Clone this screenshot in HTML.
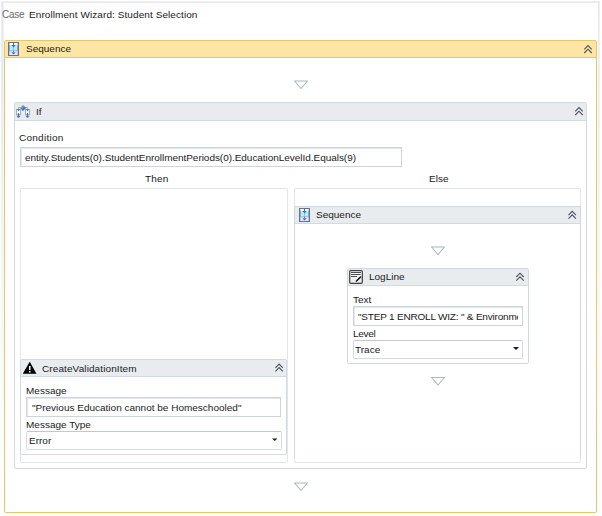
<!DOCTYPE html>
<html><head><meta charset="utf-8">
<style>
html,body{margin:0;padding:0;background:#fff;width:602px;height:516px;overflow:hidden;position:relative}
*{box-sizing:border-box}
.a{position:absolute}
.t{position:absolute;font-family:"Liberation Sans",sans-serif;font-size:10px;line-height:12px;color:#1a1a1a;white-space:pre;transform:scaleY(0.88);transform-origin:0 9.5px}
.box{position:absolute;border:1px solid #d3d9e3;border-radius:2px;background:#fff}
.hdr{position:absolute;background:#e9ecef;border-bottom:1px solid #d3d9e3}
.panel{position:absolute;border:1px solid #e1e6ed;border-radius:2px}
.tb{position:absolute;border:1px solid #cdd4df;background:#fff;box-shadow:inset 1px 1px 0 #e3e7ee}
.dd{position:absolute;border:1px solid #d6d9de;border-top-color:#c4c7cd;border-radius:2px;background:#fff}
</style></head><body>
<!-- outer faint frame -->
<div class="a" style="left:1px;top:1px;width:599px;height:2px;background:linear-gradient(#eef0f3,#e6e9ee)"></div>
<div class="a" style="left:1px;top:3px;width:3px;height:500px;background:linear-gradient(rgba(255,255,255,0),rgba(255,255,255,1)),linear-gradient(90deg,#eef1f4,#e2e6ec 50%,#f5f7fb)"></div>
<div class="a" style="left:598px;top:3px;width:2px;height:500px;background:linear-gradient(rgba(255,255,255,0),rgba(255,255,255,1)),linear-gradient(90deg,#e3e7ed,#f1f3f6)"></div>
<div class="t" style="left:2px;top:9px;color:#6a6a6a;transform:none;letter-spacing:-0.3px">Case</div>
<div class="t" style="left:29px;top:9px;letter-spacing:0.08px">Enrollment Wizard: Student Selection</div>

<!-- outer sequence -->
<div class="a" style="left:4px;top:40px;width:593px;height:473px;border:1px solid #e6c56d;border-radius:2px;background:#fff"></div>
<div class="a" style="left:5px;top:41px;width:591px;height:17px;background:#fde6a3;border-bottom:1px solid #e6c56d"></div>
<div class="t" style="left:26px;top:43px">Sequence</div>



<!-- If -->
<div class="box" style="left:14px;top:102px;width:573px;height:367px"></div>
<div class="hdr" style="left:15px;top:103px;width:571px;height:18px"></div>
<div class="t" style="left:36px;top:106px">If</div>
<div class="t" style="left:19px;top:132px;letter-spacing:0.25px">Condition</div>
<div class="tb" style="left:20px;top:147px;width:382px;height:20px"></div>
<div class="t" style="left:25px;top:152px;letter-spacing:-0.04px">entity.Students(0).StudentEnrollmentPeriods(0).EducationLevelId.Equals(9)</div>
<div class="t" style="left:145px;top:173px;letter-spacing:0.2px">Then</div>
<div class="t" style="left:429px;top:173px">Else</div>

<div class="panel" style="left:20px;top:188px;width:268px;height:275px"></div>
<div class="panel" style="left:294px;top:188px;width:287px;height:275px"></div>

<!-- inner sequence -->
<div class="a" style="left:294px;top:206px;width:287px;height:252px;border-left:1px solid #d3d9e3;border-right:1px solid #d3d9e3;border-top:1px solid #d3d9e3"></div>
<div class="hdr" style="left:295px;top:207px;width:285px;height:17px"></div>
<div class="t" style="left:316px;top:209px">Sequence</div>

<!-- LogLine -->
<div class="box" style="left:347px;top:268px;width:182px;height:96px"></div>
<div class="hdr" style="left:348px;top:269px;width:180px;height:17px"></div>
<div class="t" style="left:369px;top:271px">LogLine</div>
<div class="t" style="left:353px;top:294px">Text</div>
<div class="tb" style="left:353px;top:306px;width:170px;height:20px"></div>
<div class="a" style="left:354px;top:308px;width:164px;height:16px;overflow:hidden"><div class="t" style="left:4px;top:3px;letter-spacing:-0.2px">"STEP 1 ENROLL WIZ: " &amp; Environment</div></div>
<div class="t" style="left:353px;top:328px;letter-spacing:-0.3px">Level</div>
<div class="dd" style="left:353px;top:340px;width:170px;height:19px"></div>
<div class="t" style="left:355px;top:344px">Trace</div>

<!-- CVI -->
<div class="box" style="left:20px;top:359px;width:267px;height:96px"></div>
<div class="hdr" style="left:21px;top:360px;width:265px;height:17px"></div>
<div class="t" style="left:42px;top:363px;letter-spacing:0.1px">CreateValidationItem</div>
<div class="t" style="left:26px;top:385px">Message</div>
<div class="tb" style="left:26px;top:397px;width:255px;height:20px"></div>
<div class="t" style="left:32px;top:402px">"Previous Education cannot be Homeschooled"</div>
<div class="t" style="left:26px;top:419px">Message Type</div>
<div class="dd" style="left:26px;top:431px;width:256px;height:19px"></div>
<div class="t" style="left:29px;top:435px">Error</div>

<!-- icons & chevrons -->
<svg class="a" style="left:0;top:0" width="602" height="516">
<g fill="none" stroke="#4a525e" stroke-width="1.1">
<path d="M584.3 49.4 L588.0 45.6 L591.7 49.4 M584.3 53.0 L588.0 49.2 L591.7 53.0"/>
<path d="M575.3 111.4 L579.0 107.6 L582.7 111.4 M575.3 115.0 L579.0 111.2 L582.7 115.0"/>
<path d="M568.5 215.1 L572.2 211.3 L575.9 215.1 M568.5 218.7 L572.2 214.9 L575.9 218.7"/>
<path d="M516.3 277.0 L520.0 273.2 L523.7 277.0 M516.3 280.6 L520.0 276.8 L523.7 280.6"/>
<path d="M275.4 367.8 L279.1 364.0 L282.8 367.8 M275.4 371.4 L279.1 367.6 L282.8 371.4"/>
</g>
<g fill="#1a1a2a">
<path d="M272 438.5 L277.5 438.5 L274.75 441 Z"/>
<path d="M513 347 L519 347 L516 350 Z"/>
</g>
<!-- warning -->
<path d="M29.7 361.8 L36.5 373.8 L22.8 373.8 Z" fill="#000"/>
<rect x="29" y="366" width="1.5" height="4" fill="#fff"/>
<rect x="29" y="371" width="1.5" height="1.5" fill="#fff"/>
</svg>

<!-- Sequence icons -->
<svg class="a" style="left:8px;top:42px" width="11" height="14" viewBox="0 0 11 14">
<defs><linearGradient id="sg" x1="0" x2="1"><stop offset="0" stop-color="#8593b3"/><stop offset="0.5" stop-color="#dfe6f7"/><stop offset="1" stop-color="#8593b3"/></linearGradient></defs>
<rect x="0.5" y="0.5" width="10" height="13" fill="url(#sg)" stroke="#66728e"/>
<rect x="1.5" y="1" width="8" height="2" fill="#fdfdff"/>
<rect x="2" y="3" width="7" height="5.5" fill="#b0f0f3"/>
<rect x="1" y="8.5" width="9" height="0.8" fill="#a4afc6"/>
<rect x="1.5" y="9.3" width="8" height="3.7" fill="#e3e9fb"/>
<rect x="5" y="1" width="1" height="2" fill="#3f6dd0"/>
<rect x="5" y="5" width="1" height="3.5" fill="#8fc4ea"/>
<rect x="5" y="8.5" width="1" height="2" fill="#5a86d8"/>
<path d="M3.3 3 L7.7 3 L5.5 5.6 Z M3.3 10.3 L7.7 10.3 L5.5 12.5 Z" fill="#3f6dd0"/>
</svg>
<svg class="a" style="left:299px;top:208px" width="11" height="14" viewBox="0 0 11 14">
<rect x="0.5" y="0.5" width="10" height="13" fill="url(#sg)" stroke="#66728e"/>
<rect x="1.5" y="1" width="8" height="2" fill="#fdfdff"/>
<rect x="2" y="3" width="7" height="5.5" fill="#b0f0f3"/>
<rect x="1" y="8.5" width="9" height="0.8" fill="#a4afc6"/>
<rect x="1.5" y="9.3" width="8" height="3.7" fill="#e3e9fb"/>
<rect x="5" y="1" width="1" height="2" fill="#3f6dd0"/>
<rect x="5" y="5" width="1" height="3.5" fill="#8fc4ea"/>
<rect x="5" y="8.5" width="1" height="2" fill="#5a86d8"/>
<path d="M3.3 3 L7.7 3 L5.5 5.6 Z M3.3 10.3 L7.7 10.3 L5.5 12.5 Z" fill="#3f6dd0"/>
</svg>
<!-- If icon -->
<svg class="a" style="left:14px;top:103px" width="18" height="17" viewBox="0 0 18 17">
<defs><linearGradient id="dg" x1="0" y1="0" x2="1" y2="1"><stop offset="0" stop-color="#d6e4fb"/><stop offset="0.45" stop-color="#5d89de"/><stop offset="1" stop-color="#173f98"/></linearGradient></defs>
<path d="M4.5 6.5 L4.5 4.5 L7 4.5 M11 4.5 L13.5 4.5 L13.5 6.5" fill="none" stroke="#8fb0e6" stroke-width="1"/>
<rect x="2.5" y="6.5" width="4" height="5" fill="#fff" stroke="#a8a8a8"/>
<rect x="11.5" y="6.5" width="4" height="5" fill="#fff" stroke="#a8a8a8"/>
<path d="M8.9 1.8 L12 4.9 L8.9 8 L5.8 4.9 Z" fill="url(#dg)"/>
<path d="M3 6.3 L6 6.3 L4.5 8.6 Z M12 6.3 L15 6.3 L13.5 8.6 Z" fill="#3f6dd0"/>
<rect x="4" y="10" width="1" height="3" fill="#3f6dd0"/>
<rect x="13" y="10" width="1" height="3" fill="#3f6dd0"/>
<path d="M2.3 12.8 L6.7 12.8 L4.5 15 Z M11.3 12.8 L15.7 12.8 L13.5 15 Z" fill="#3f6dd0"/>
</svg>
<!-- LogLine icon -->
<svg class="a" style="left:349px;top:270px" width="14" height="14" viewBox="0 0 14 14">
<defs><linearGradient id="lg" x1="0" y1="0" x2="0" y2="1"><stop offset="0" stop-color="#ffffff"/><stop offset="1" stop-color="#e8eaee"/></linearGradient></defs>
<rect x="0.7" y="0.7" width="12.6" height="12.6" rx="1" fill="url(#lg)" stroke="#3f3f3f" stroke-width="1.2"/>
<rect x="2" y="2" width="10" height="1" fill="#4d4d4d"/>
<rect x="2" y="4" width="9.5" height="1" fill="#4d4d4d"/>
<rect x="2" y="6" width="6" height="1" fill="#4d4d4d"/>
<path d="M7.5 11 L11.5 7" stroke="#111" stroke-width="1.6" stroke-linecap="round"/>
</svg>
<!-- triangles -->
<svg class="a" style="left:0;top:0" width="602" height="516">
<g fill="none" stroke="#aab5c7" stroke-width="1.1" stroke-linejoin="round">
<path d="M294.5 81 L307.5 81 L301 88.5 Z"/>
<path d="M431.5 247 L444.5 247 L438 254.5 Z"/>
<path d="M431.5 377.5 L444.5 377.5 L438 385 Z"/>
<path d="M294.5 483 L307.5 483 L301 490.5 Z"/>
</g>
</svg>
</body></html>
